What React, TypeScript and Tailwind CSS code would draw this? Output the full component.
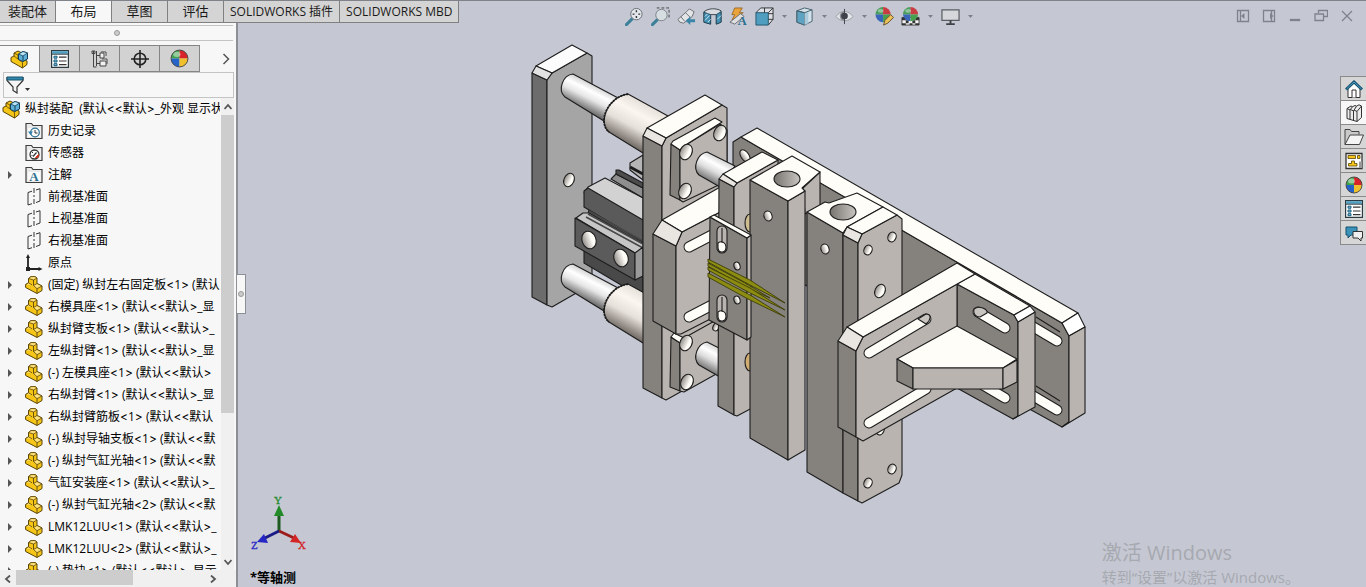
import React from "react";

const INK = "#1d1d1d";
const TOP = "#fffdf8";
const DARK = "#85827d";
const SIDE = "#b9b4b0";
const BEVEL = "#e9e6e1";

const ribbonTabs = ["装配体", "布局", "草图", "评估", "SOLIDWORKS 插件", "SOLIDWORKS MBD"];

type NodeKind = "history" | "sensor" | "note" | "plane" | "origin" | "part";

interface TreeNode {
  kind: NodeKind;
  label: string;
  expandable?: boolean;
}

const treeNodes: TreeNode[] = [
  { kind: "history", label: "历史记录" },
  { kind: "sensor", label: "传感器" },
  { kind: "note", label: "注解", expandable: true },
  { kind: "plane", label: "前视基准面" },
  { kind: "plane", label: "上视基准面" },
  { kind: "plane", label: "右视基准面" },
  { kind: "origin", label: "原点" },
  { kind: "part", label: "(固定) 纵封左右固定板<1> (默认", expandable: true },
  { kind: "part", label: "右模具座<1> (默认<<默认>_显", expandable: true },
  { kind: "part", label: "纵封臂支板<1> (默认<<默认>_", expandable: true },
  { kind: "part", label: "左纵封臂<1> (默认<<默认>_显", expandable: true },
  { kind: "part", label: "(-) 左模具座<1> (默认<<默认>", expandable: true },
  { kind: "part", label: "右纵封臂<1> (默认<<默认>_显", expandable: true },
  { kind: "part", label: "右纵封臂筋板<1> (默认<<默认", expandable: true },
  { kind: "part", label: "(-) 纵封导轴支板<1> (默认<<默", expandable: true },
  { kind: "part", label: "(-) 纵封气缸光轴<1> (默认<<默", expandable: true },
  { kind: "part", label: "气缸安装座<1> (默认<<默认>_", expandable: true },
  { kind: "part", label: "(-) 纵封气缸光轴<2> (默认<<默", expandable: true },
  { kind: "part", label: "LMK12LUU<1> (默认<<默认>_", expandable: true },
  { kind: "part", label: "LMK12LUU<2> (默认<<默认>_", expandable: true },
  { kind: "part", label: "(-) 垫块<1> (默认<<默认>_显示", expandable: true },
];

/* ---------- icons ---------- */

const PartIcon = () => (
  <svg width="18" height="18" viewBox="0 0 18 18" stroke="#5a4508" strokeLinejoin="round">
    <path d="M3.500 2.500 6 .6h4l2 1.400v5.500l5 2.500v4.500l-5 3L.6 11.500V8.500l2.900-1.700z" fill="#f5c518" />
    <path d="M3.500 2.500 6 .6h4l2 1.400-3.500 2zM.6 8.500l2.900-1.700 3.500 2M8.500 9.500 12 7.500l5 2.500-5 2.700z" fill="#ffe27a" strokeWidth=".8" />
    <path d="M8.500 4v5.500M12 12.700v4.600" fill="none" strokeWidth=".9" />
  </svg>
);

const AssemblyIcon = () => (
  <svg width="19" height="19" viewBox="0 0 19 19" strokeLinejoin="round">
    <path d="M1 7.500 4 6V3l4-2 3 1.500V8l6 3v3.500L12.500 18 1 11.500z" fill="#f5c518" stroke="#5a4508" />
    <path d="m4 3 4 2v4l4.500 3.500V18M4 6l4 3" fill="none" stroke="#5a4508" strokeWidth=".8" />
    <path d="M8.500 4 13 1.500 17.500 3v6L13 11.500 8.500 9.500z" fill="#5fb0d8" stroke="#123f57" />
    <path d="m8.500 4 4.500 2 4.500-3L13 1.500z" fill="#b7e2f5" stroke="#123f57" strokeWidth=".8" />
    <path d="M13 6v5.500" stroke="#123f57" />
  </svg>
);

const FolderFrame = ({ children }: { children?: React.ReactNode }) => (
  <svg width="18" height="18" viewBox="0 0 18 18">
    <path d="M1 16.500v-15h5.500l1.500 2h9v13z" fill="#e9e9e9" stroke="#3f3f3f" strokeWidth="1.200" />
    <path d="M3 6h12.500v9H3z" fill="#fafafa" />
    {children}
  </svg>
);

const ListIcon = ({ size = 18 }: { size?: number }) => (
  <svg width={size} height={size} viewBox="0 0 18 18">
    <path d="M.6.6h16.800v16.800H.6z" fill="#fff" stroke="#2c3a42" strokeWidth="1.200" />
    <path d="M1.200 1.200h15.600v2.600H1.200z" fill="#4d9fc4" />
    <path d="M0 4.200h18" stroke="#2c3a42" />
    <path d="M3 6.200h3v2H3zM3 10h3v2H3zM3 13.700h3v2H3z" fill="#8fc7df" stroke="#155b7c" />
    <path d="M8 7.200h7.500M8 11h7.500M8 14.700h7.500" stroke="#333" strokeWidth="1.200" />
  </svg>
);

const ColorBall = ({ size = 18 }: { size?: number }) => (
  <svg width={size} height={size} viewBox="0 0 18 18">
    <path d="M9 9V1a8 8 0 0 0-8 8z" fill="#3fa34d" />
    <path d="M9 9H1a8 8 0 0 0 8 8z" fill="#2563c9" />
    <path d="M9 9V1a8 8 0 0 1 8 8z" fill="#d8232a" />
    <path d="M9 9h8a8 8 0 0 1-8 8z" fill="#f0c02c" />
    <ellipse cx="6.500" cy="5" rx="3.500" ry="2.500" fill="#fff" opacity=".45" />
    <circle cx="9" cy="9" r="8" fill="none" stroke="#444" strokeWidth=".9" />
  </svg>
);

const nodeIcons: Record<NodeKind, React.ReactNode> = {
  history: (
    <FolderFrame>
      <circle cx="10" cy="10.500" r="4.300" fill="none" stroke="#2c6f90" strokeWidth="1.200" />
      <path d="M10 8v3h2.500" fill="none" stroke="#333" />
      <path d="m3 9.500 5 0-2.500 3.500z" fill="#2c7fa8" />
    </FolderFrame>
  ),
  sensor: (
    <FolderFrame>
      <circle cx="9.500" cy="10.500" r="4.500" fill="#fff" stroke="#333" strokeWidth="1.300" />
      <path d="M7 8.500h1M6.500 11.500h1" stroke="#333" />
      <path d="m8 12.500 3.500-4" stroke="#333" strokeWidth="1.200" />
      <path d="m10.500 13.500 3-3-.5 3z" fill="#d0341f" stroke="#d0341f" />
    </FolderFrame>
  ),
  note: (
    <FolderFrame>
      <text x="9" y="15" textAnchor="middle" fontFamily="Liberation Serif, serif" fontWeight="bold" fontSize="13" fill="#2c6f90">
        A
      </text>
    </FolderFrame>
  ),
  plane: (
    <svg width="18" height="18" viewBox="0 0 18 18" fill="none" stroke="#333">
      <path d="M3 17V4.500l4-1.300M11 2l4-1.300V13l-4 1.500M3 17l4-1.300" />
      <path d="M9 0v18" strokeDasharray="5 2 2 2" />
    </svg>
  ),
  origin: (
    <svg width="18" height="18" viewBox="0 0 18 18" fill="#222" stroke="#222">
      <path d="M3 15V3M3 15h12" strokeWidth="1.800" />
      <path d="M3 0 1 4h4zM17.500 15l-4-2v4zM1 13h4v4H1z" stroke="none" />
    </svg>
  ),
  part: <PartIcon />,
};

const Chevron = ({ d }: { d: string }) => (
  <svg width="8" height="8" viewBox="0 0 8 8" fill="none" stroke="#555" strokeWidth="1.800">
    <path d={d} />
  </svg>
);

/* ---------- feature manager ---------- */

const managerTabs = [
  { name: "设计树", icon: <AssemblyIcon /> },
  { name: "属性", icon: <ListIcon /> },
  {
    name: "配置",
    icon: (
      <svg width="18" height="18" viewBox="0 0 18 18" fill="#f2f2f2" stroke="#444">
        <path d="M2.500 1v16M5.500 1v15M2.500 17h3M6 5.500h3M6 13.500h3M1 1h3v2.500H1z" fill="none" />
        <path d="M9 3h4v5H9zM10 2h5v4M9 11h6v5H9zM11 9h5v5" />
      </svg>
    ),
  },
  {
    name: "尺寸",
    icon: (
      <svg width="18" height="18" viewBox="0 0 18 18" fill="none" stroke="#222" strokeWidth="1.600">
        <circle cx="9" cy="9" r="5.800" />
        <path d="M9 0v18M0 9h18" />
      </svg>
    ),
  },
  { name: "外观", icon: <ColorBall size={19} /> },
];

// Open Sans draws narrow angle brackets, so those come from Inter
const NodeLabel = ({ text }: { text: string }) => (
  <span>
    {text.split(/([<>]+)/).map((part, i) =>
      i % 2 ? (
        <span key={i} className="font-['Inter']">
          {part}
        </span>
      ) : (
        part
      ),
    )}
  </span>
);

const FeatureTree = () => (
  <div className="flex min-h-0 flex-1">
    <div className="min-w-0 flex-1 overflow-hidden whitespace-pre text-[12px] leading-[22px] text-black">
      <div className="flex h-[22px] items-center gap-1 pl-[2px]">
        <span className="shrink-0">
          <AssemblyIcon />
        </span>
        <NodeLabel text="纵封装配  (默认<<默认>_外观 显示状" />
      </div>
      <ul>
        {treeNodes.map((node, i) => (
          <li key={i} className="flex h-[22px] items-center">
            <span className="flex w-[25px] shrink-0 pl-2">
              {node.expandable && (
                <button type="button" aria-label="展开">
                  <svg width="4" height="8" viewBox="0 0 4 8">
                    <path d="M0 0l4 4-4 4z" fill="#555" />
                  </svg>
                </button>
              )}
            </span>
            <span className="w-[23px] shrink-0">{nodeIcons[node.kind]}</span>
            <NodeLabel text={node.label} />
          </li>
        ))}
      </ul>
    </div>
    <div className="ml-px mr-[2px] flex w-[13px] shrink-0 flex-col bg-[#f0f0f0]">
      <button type="button" aria-label="向上" className="flex h-[17px] items-center justify-center">
        <Chevron d="M.5 6 4 2l3.500 4" />
      </button>
      <div className="flex-1">
        <div className="h-[68%] bg-[#cdcdcd]" />
      </div>
      <button type="button" aria-label="向下" className="flex h-[17px] items-center justify-center">
        <Chevron d="M.5 2 4 6l3.500-4" />
      </button>
    </div>
  </div>
);

const FeatureManager = () => (
  <aside className="relative flex w-[238px] shrink-0 flex-col border-r-2 border-[#8d8f97] bg-[#f7f7f7]">
    <nav className="relative z-10 flex h-[22px] w-max shrink-0 border-b border-[#808080] text-[13px] text-[#1a1a1a]">
      {ribbonTabs.map((tab, i) => (
        <button
          key={tab}
          type="button"
          className={
            i === 1
              ? "w-14 border-r border-[#808080] bg-[#f7f7f7]"
              : i < 4
                ? "w-14 border-r border-[#808080] bg-[#d4d4d4]"
                : "border-r border-[#808080] bg-[#d4d4d4] px-[6px] text-[12px]"
          }
        >
          {tab}
        </button>
      ))}
    </nav>
    <div className="mr-[3px] mt-[2px] flex h-4 shrink-0 items-center justify-center border-y border-[#c4c4c4]">
      <span className="size-[6px] rounded-full border border-[#999] bg-[#ccc]" />
    </div>
    <div className="mt-1 flex h-[27px] shrink-0 items-stretch">
      {managerTabs.map((tab, i) => (
        <button
          key={tab.name}
          type="button"
          aria-label={tab.name}
          className={
            i === 0
              ? "flex w-10 items-center justify-center border-r border-t border-[#858585] bg-[#f7f7f7]"
              : "flex w-10 items-center justify-center border-y border-r border-[#858585] bg-[#d2d2d2]"
          }
        >
          {tab.icon}
        </button>
      ))}
      <button type="button" aria-label="更多" className="ml-auto pr-[6px]">
        <svg width="8" height="12" viewBox="0 0 8 12" fill="none" stroke="#555" strokeWidth="1.500">
          <path d="m1.500 1 5 5-5 5" />
        </svg>
      </button>
    </div>
    <label className="ml-[3px] mr-[2px] flex h-[26px] shrink-0 items-center border border-[#c4c4c4] pl-[2px]">
      <svg width="24" height="18" viewBox="0 0 24 18">
        <path d="M1 1.500h16v3L11 11v6l-4-2.500V11L1 4.500z" fill="#f4f4f4" stroke="#333" strokeWidth="1.200" />
        <path d="M1 1h16v3H1z" fill="#2f88ae" stroke="#1d536b" />
        <path d="M19 12h5l-2.500 3z" fill="#333" />
      </svg>
      <input type="text" aria-label="过滤" className="min-w-0 flex-1 bg-transparent text-[12px] outline-none" />
    </label>
    <FeatureTree />
    <div className="flex h-[17px] shrink-0 items-stretch bg-[#f0f0f0]">
      <button type="button" aria-label="向左" className="flex w-4 items-center justify-center">
        <Chevron d="M6 .5 2 4l4 3.500" />
      </button>
      <div className="flex-1">
        <div className="h-[15px] w-[62%] bg-[#cdcdcd]" />
      </div>
      <button type="button" aria-label="向右" className="mr-[15px] flex w-4 items-center justify-center">
        <Chevron d="M2 .5 6 4 2 7.500" />
      </button>
    </div>
    <button
      type="button"
      aria-label="折叠面板"
      className="absolute -right-[10px] top-[273px] z-10 flex h-10 w-[9px] items-center justify-center border border-l-0 border-[#8d8f97] bg-[#f7f7f7]"
    >
      <span className="size-[6px] rounded-full border border-[#999] bg-[#ccc]" />
    </button>
  </aside>
);

/* ---------- view toolbar ---------- */

const viewTools: { name: string; menu?: boolean; art: React.ReactNode }[] = [
  {
    name: "整屏显示全图",
    art: (
      <>
        <path d="m1.500 18.500 6-6" stroke="#3d8099" strokeWidth="3.200" strokeLinecap="round" />
        <circle cx="12" cy="7.500" r="6" fill="#e4e8ec" stroke="#666d74" />
        <path d="M12 3.500v2M12 9.500v2M8 7.500h2M14 7.500h2" stroke="#333" strokeWidth="1.500" />
      </>
    ),
  },
  {
    name: "局部放大",
    art: (
      <>
        <path d="M6 1h13v11" fill="none" stroke="#444" strokeDasharray="3 2" />
        <path d="m1.500 18.500 5-5" stroke="#3d8099" strokeWidth="3.200" strokeLinecap="round" />
        <circle cx="11" cy="8.500" r="6" fill="#d7dee2" stroke="#7a8289" />
      </>
    ),
  },
  {
    name: "上一视图",
    art: (
      <>
        <path d="m1 13 9-8 3-3 5 3-2 5-9 7-4-1z" fill="#e4e5e7" stroke="#6c6f74" />
        <path d="m9 6 5 5M4 10l4 5" stroke="#6c6f74" />
        <path d="m9 14.500 5-4.500v3h5v3h-5v3z" fill="#3b86a8" />
      </>
    ),
  },
  {
    name: "剖面视图",
    art: (
      <>
        <path d="M1 5c5-4 13-4 18-1v12l-5 2V8H8v10l-7-2z" fill="#d9dbdf" stroke="#3c464d" />
        <path d="M1 5.500 8 8v10l-7-2zM14 8l5-3v11l-5 2z" fill="#4391b4" stroke="#234b5e" />
        <path d="m2 10 3-3M2 14l5-5M5 16l3-3M15 13l4-4" stroke="#d4e8f0" />
      </>
    ),
  },
  {
    name: "动态注解视图",
    art: (
      <>
        <path d="M6 1h8l-3 5h4L3 14l3-6H3z" fill="#eaa33b" stroke="#8e5c16" strokeWidth=".8" />
        <path d="m1 16 11-9 4 3-10 8z" fill="#dedfe1" stroke="#6c6f74" />
        <text x="14" y="19" textAnchor="middle" fontFamily="Liberation Serif, serif" fontWeight="bold" fontSize="13" fill="#2c6f90">
          A
        </text>
      </>
    ),
  },
  {
    name: "视图定向",
    menu: true,
    art: (
      <>
        <path d="m1 6 5-5h13v12l-5 6" fill="#dce0e6" stroke="#333" />
        <path d="M1 6h13v13H1z" fill="#4f9dbf" stroke="#25566c" />
        <path d="m14 6 5-5M10 1v5M19 7h-5M14 13h5" fill="none" stroke="#333" />
      </>
    ),
  },
  {
    name: "显示样式",
    menu: true,
    art: (
      <>
        <path d="m2 4 8-3 8 2v12l-8 4-8-3z" fill="#d3e2ea" stroke="#46606e" />
        <path d="m2 4 8 2v13l-8-3z" fill="#5ea3c1" stroke="#46606e" />
        <path d="m10 6 4-1.500v12.700L10 19z" fill="#a9cbdb" />
        <path d="m2 4 8 2 8-3" fill="none" stroke="#46606e" />
      </>
    ),
  },
  {
    name: "隐藏/显示项目",
    menu: true,
    art: (
      <>
        <path d="M1 10c5-7 13-7 18 0-5 6-13 6-18 0z" fill="#e4e5e8" stroke="#9a9da3" />
        <path d="M10 4.500a5 5 0 0 0 0 10z" fill="#8b8e94" />
        <circle cx="10" cy="9.500" r="3.500" fill="#3d4349" />
        <path d="M10 2v16" stroke="#3d4349" />
      </>
    ),
  },
  {
    name: "编辑外观",
    art: (
      <>
        <path d="M8.500 8V0a8 8 0 0 0-8 8z" fill="#4a9e5c" />
        <path d="M8.500 8h-8a8 8 0 0 0 8 8z" fill="#3a66b9" />
        <path d="M8.500 8V0a8 8 0 0 1 8 8z" fill="#c93c42" />
        <path d="M8.500 8h8a8 8 0 0 1-8 8z" fill="#46a04e" />
        <ellipse cx="6" cy="4" rx="3" ry="2" fill="#fff" opacity=".4" />
        <path d="m9 19 1.500-5 6-6 3 3-6 6z" fill="#edc15a" stroke="#63502a" />
      </>
    ),
  },
  {
    name: "应用布景",
    menu: true,
    art: (
      <>
        <path d="M1 11h18v8H1z" fill="#f5f5f5" stroke="#444" />
        <path d="M1 11h4v3H1zM9 17h3v2H9zM5 14h3v3H5zM15 11h4v3h-4zM12 14h3v3h-3zM1 17h4v2H1zM15 17h4v2h-4z" fill="#333" />
        <path d="M10 8V0a8 8 0 0 0-8 8z" fill="#4a9e5c" />
        <path d="M10 8H2a8 8 0 0 0 8 7z" fill="#3a66b9" />
        <path d="M10 8V0a8 8 0 0 1 8 8z" fill="#c93c42" />
        <path d="M10 8h8a8 8 0 0 1-8 7z" fill="#46a04e" />
        <ellipse cx="7.500" cy="4" rx="3" ry="2" fill="#fff" opacity=".4" />
      </>
    ),
  },
  {
    name: "视图设定",
    menu: true,
    art: (
      <>
        <path d="M1 3h18v11H1z" fill="#d5d7db" stroke="#5b5e63" strokeWidth="1.300" />
        <path d="M10 14v3M5.500 18h9" stroke="#3f4145" strokeWidth="2" />
      </>
    ),
  },
];

const ViewToolbar = () => (
  <div className="relative flex h-[30px] items-center justify-center pr-[6px]">
    {viewTools.map((tool) => (
      <React.Fragment key={tool.name}>
        <button type="button" aria-label={tool.name} className="flex w-[26px] justify-center">
          <svg width="19" height="19" viewBox="0 0 20 20">
            {tool.art}
          </svg>
        </button>
        {tool.menu && (
          <button type="button" aria-label={`${tool.name}菜单`} className="flex w-[14px] justify-center">
            <svg width="5" height="3" viewBox="0 0 5 3">
              <path d="M0 0h5L2.500 3z" fill="#7d8088" />
            </svg>
          </button>
        )}
      </React.Fragment>
    ))}
  </div>
);

const windowButtons = [
  {
    name: "展开左侧",
    art: (
      <>
        <path d="M1.500 1.500h11v11h-11zM4.500 1.500v11" />
        <path d="M8.500 4v6L5 7z" fill="#7f828a" stroke="none" />
      </>
    ),
  },
  {
    name: "展开右侧",
    art: (
      <>
        <path d="M1.500 1.500h11v11h-11zM9.500 1.500v11" />
        <path d="M8 4v6l3.500-3z" fill="#7f828a" stroke="none" />
      </>
    ),
  },
  { name: "最小化", art: <path d="M2.500 10.500h9v1h-9z" /> },
  { name: "还原", art: <path d="M4.500 4V1.500h9v6H10M1 5h8.500v6.500H1z" /> },
  { name: "关闭", art: <path d="m2 2 10 10M12 2 2 12" /> },
];

const WindowButtons = () => (
  <div className="absolute right-[6px] top-0 flex h-[30px] items-center">
    {windowButtons.map((b) => (
      <button key={b.name} type="button" aria-label={b.name} className="flex w-[26px] justify-center">
        <svg width="14" height="14" viewBox="0 0 14 14" fill="none" stroke="#7f828a" strokeWidth="1.300">
          {b.art}
        </svg>
      </button>
    ))}
  </div>
);

/* ---------- task pane ---------- */

const taskPanes = [
  {
    name: "资源",
    icon: (
      <svg width="18" height="18" viewBox="0 0 18 18">
        <path d="M3 8v9.500h12V8L9 2.500z" fill="#fff" stroke="#333" />
        <path d="M7 17.500V10h4v7.500" fill="#fff" stroke="#333" />
        <path d="M1 9.500 9 2l8 7.500" fill="none" stroke="#17506e" strokeWidth="3" />
        <path d="M1.500 9 9 2l7.500 7" fill="none" stroke="#4aa3c7" />
      </svg>
    ),
  },
  {
    name: "设计库",
    icon: (
      <svg width="18" height="18" viewBox="0 0 18 18" fill="#ececec" stroke="#333" strokeLinejoin="round">
        <path d="M2 4.500 6 2l1.500.7L10 1.500l1.500.7L14 .8l2.500 1.200v11.500l-4.500 4L2 14.500z" />
        <path d="M2 4.500 5 6v9.500M5 6l2.500-3.300M5.500 5.500 8.500 7v9.500M8.500 7l3-4.800M9 6l3 1.500v10M12 7.500l4.500-5.500" fill="none" />
      </svg>
    ),
  },
  {
    name: "文件探索器",
    icon: (
      <svg width="20" height="18" viewBox="0 0 20 18" stroke="#444">
        <path d="M1 16.500V1.500h5l1.500 2H15v3" fill="#c9c9c9" />
        <path d="M1 16.500 6 7h13.500l-4 9.500z" fill="#f4f4f4" />
      </svg>
    ),
  },
  {
    name: "视图调色板",
    icon: (
      <svg width="18" height="18" viewBox="0 0 18 18">
        <path d="M1 1.500h16v15H1z" fill="#fff" stroke="#333" strokeWidth="1.300" />
        <path d="M3 3.500h7.500v3H3zM12.500 3.500H15v3h-2.500zM6.500 9h3v2.500H12V14H3.500v-2.500h3z" fill="#f5c518" stroke="#5a4508" strokeWidth=".8" />
        <path d="M14 9.500h3v6.500h-3z" fill="#999" />
      </svg>
    ),
  },
  { name: "外观", icon: <ColorBall /> },
  { name: "自定义属性", icon: <ListIcon /> },
  {
    name: "论坛",
    icon: (
      <svg width="18" height="18" viewBox="0 0 18 18">
        <path d="M1 3h11v8H6l-3 3v-3H1z" fill="#3b93b9" stroke="#17506e" />
        <path d="M8 7.500h9.500v6.500H16v3l-3-3H8z" fill="#f0f0f0" stroke="#333" />
      </svg>
    ),
  },
];

const TaskPane = () => (
  <nav className="absolute right-0 top-[75px] flex w-[26px] flex-col border-l border-t border-[#8a8a8a]">
    {taskPanes.map((pane, i) => (
      <button
        key={pane.name}
        type="button"
        aria-label={pane.name}
        className={
          i === 1
            ? "flex h-6 items-center justify-center border-b border-[#8a8a8a] bg-[#f7f7f7]"
            : "flex h-6 items-center justify-center border-b border-[#8a8a8a] bg-[#d6d6d6]"
        }
      >
        {pane.icon}
      </button>
    ))}
  </nav>
);

/* ---------- assembly drawing ---------- */

const Face = ({ p, f }: { p: string; f: string }) => <polygon points={p} fill={f} />;

const Hole = ({ x, y, rx = 4, ry = 5, a = 25 }: { x: number; y: number; rx?: number; ry?: number; a?: number }) => (
  <ellipse cx={x} cy={y} rx={rx} ry={ry} transform={`rotate(${a} ${x} ${y})`} fill="url(#bore)" />
);

const Slot = ({ d }: { d: string }) => (
  <g strokeLinecap="round" fill="none">
    <path d={d} stroke={INK} strokeWidth="11" />
    <path d={d} stroke={TOP} strokeWidth="9" />
  </g>
);

const GuideRod = () => (
  <>
    <path d="M573 74 620 99 604 121 565 97C557 90 563 75 573 74z" fill="url(#steel)" />
    <path d="M628 94 668 116 643 153 609 132C597 122 608 97 628 94z" fill="url(#sleeve)" />
    <path d="M628 94C608 97 597 122 609 132" fill="none" strokeWidth="1.800" strokeDasharray="2 1" />
  </>
);

const PinEnd = () => <path d="M707 152 735 166 720 187 699 175C692 168 697 154 707 152z" fill="url(#pin)" />;

const Assembly = () => (
  <svg
    viewBox="238 1 1128 586"
    className="absolute inset-0 h-full w-full"
    stroke={INK}
    strokeWidth="1.100"
    strokeLinejoin="round"
    role="img"
    aria-label="纵封装配"
  >
    <defs>
      <linearGradient id="steel" gradientUnits="userSpaceOnUse" x1="596" y1="84" x2="583" y2="110">
        <stop offset="0" stopColor="#c9c9cb" />
        <stop offset=".3" stopColor="#ffffff" />
        <stop offset=".55" stopColor="#e6e6e6" />
        <stop offset="1" stopColor="#626262" />
      </linearGradient>
      <linearGradient id="sleeve" gradientUnits="userSpaceOnUse" x1="648" y1="103" x2="626" y2="144">
        <stop offset="0" stopColor="#e2ddd7" />
        <stop offset=".3" stopColor="#fbf6f0" />
        <stop offset=".6" stopColor="#e6e0da" />
        <stop offset="1" stopColor="#6c655f" />
      </linearGradient>
      <linearGradient id="pin" gradientUnits="userSpaceOnUse" x1="723" y1="158" x2="709" y2="184">
        <stop offset="0" stopColor="#c9c9cb" />
        <stop offset=".3" stopColor="#ffffff" />
        <stop offset=".55" stopColor="#dcdcdc" />
        <stop offset="1" stopColor="#5c5c5c" />
      </linearGradient>
      <linearGradient id="bore" x1="0" y1="0" x2="1" y2="0">
        <stop offset="0" stopColor="#8f8a86" />
        <stop offset=".7" stopColor="#fffdf8" />
      </linearGradient>
      <linearGradient id="deep" x1="0" y1="0" x2="1" y2="0">
        <stop offset="0" stopColor="#77736f" />
        <stop offset="1" stopColor="#c8c4bf" />
      </linearGradient>
    </defs>

    {/* rear mounting plate */}
    <Face p="532,73 547,80 547,305 532,297" f="#6c6c6c" />
    <Face p="547,80 552,73 587,53 592,56 592,284 552,307 547,305" f="#a5a5a5" />
    <Face p="536,66 572,45 587,53 552,73" f="#fcfcfc" />
    <Face p="532,73 536,66 552,73 547,80" f="#e2e2e2" />
    <Hole x={569} y={180} rx={5} ry={7} />

    {/* pneumatic slide */}
    <Face p="630,163 643,155 643,180 630,170" f="#b5b5b5" />
    <path d="M630 167 643 174" strokeWidth="3" />
    <Face p="611,179 616,174 643,188 643,198" f="#8e8e8e" />
    <Face p="616,170 619,170 643,183 643,188 616,174" f="#4d4d4d" />
    <Face p="584,240 643,275 643,298 584,263" f="#494949" />
    <Face p="590,206 643,236 643,246 588,214" f="#515151" />
    <Face p="584,193 588,187 605,178 643,198 643,222" f="#d2d2d2" />
    <Face p="584,191 588,188 643,220 643,242 584,207" f="#5a5a5a" />
    <Face p="576,218 583,213 589,213 643,244 643,250 635,253" f="#c6c6c6" />
    <path d="M589 211 643 241M588 214 643 244M586 217 643 248" strokeWidth="1.500" stroke="#474747" />
    <Face p="575,218 635,253 635,280 575,246" f="#5b5b5b" />
    <Face p="635,253 643,247 643,276 635,280" f="#9a9a9a" />
    <Hole x={589} y={240} rx={7} ry={9} a={-20} />
    <Hole x={621} y={258} rx={7} ry={9} a={-20} />

    {/* guide rods */}
    <GuideRod />
    <g transform="translate(0 190)">
      <GuideRod />
    </g>

    {/* beam at the back */}
    <Face p="733,142 741,137 1062,323 1069,336 1069,422 1062,427 733,245" f={DARK} />
    <Face p="741,137 757,128 1078,313 1062,323" f={TOP} />
    <Face p="1062,323 1078,313 1085,327 1069,336" f="#ffffff" />
    <Face p="1069,336 1085,327 1085,413 1062,427 1069,422" f={SIDE} />
    <Hole x={745} y={156} rx={4} ry={7} a={-35} />
    <path d="M1036 317 1060 332M1036 386 1060 401" />
    <Slot d="M1030 325 1057 341" />
    <Slot d="M1030 394 1057 410" />

    {/* flange carrier */}
    <Face p="643,136 662,146 662,398 643,388" f={DARK} />
    <Face p="662,146 666,138 722,105 727,108 727,366 666,400 662,398" f={SIDE} />
    <Face p="647,128 705,95 722,105 666,138" f={TOP} />
    <Face p="643,136 647,128 666,138 662,146" f={BEVEL} />
    <Face p="671,144 680,150 680,200 670,195" f={DARK} />
    <Face p="680,150 684,146 720,124 727,130 727,181 683,202 680,200" f={SIDE} />
    <Face p="671,144 673,141 715,118 722,122 684,146 680,150" f={TOP} />
    <Hole x={686} y={152} rx={6} ry={8} />
    <Hole x={720} y={133} rx={6} ry={8} />
    <Hole x={685} y={191} rx={6} ry={8} />
    <Face p="671,337 680,343 680,391 670,387" f={DARK} />
    <Face p="680,343 684,338 727,314 727,368 684,392 680,391" f={SIDE} />
    <Face p="671,337 674,333 684,338 680,343" f={TOP} />
    <Hole x={686} y={343} rx={6} ry={8} />
    <Hole x={687} y={382} rx={6} ry={8} />
    <Hole x={716} y={327} rx={3} ry={4} />
    <PinEnd />
    <g transform="translate(0 190)">
      <PinEnd />
    </g>

    {/* slotted block */}
    <Face p="653,234 676,246 676,334 653,321" f={DARK} />
    <Face p="676,246 682,232 722,211 722,313 681,334 676,334" f={SIDE} />
    <Face p="662,220 722,186 722,211 682,232" f={TOP} />
    <Face p="653,234 662,220 682,232 676,246" f={BEVEL} />
    <Slot d="M689 247 714 234" />
    <Slot d="M689 317 714 304" />

    {/* narrow upright */}
    <Face p="719,179 734,187 734,415 718,406" f={DARK} />
    <Face p="734,187 737,183 778,160 778,394 737,416 734,415" f={SIDE} />
    <Face p="723,174 762,152 778,160 737,183" f={TOP} />
    <Face p="719,179 723,174 737,183 734,187" f={BEVEL} />
    <ellipse cx="750" cy="223" rx="5" ry="9" fill="#cdbd90" />
    <ellipse cx="750" cy="362" rx="5" ry="9" fill="#d0ac70" />

    {/* left arm */}
    <Face p="803,188 820,172 820,206 805,214" f={SIDE} />
    <Face p="750,180 788,201 788,460 750,438" f={DARK} />
    <Face p="788,201 805,191 805,450 788,460" f={SIDE} />
    <Face p="750,180 792,156 820,172 802,188 805,191 788,201" f={TOP} />
    <ellipse cx="787" cy="179" rx="13" ry="8" fill="url(#deep)" />
    <Hole x={768} y={216} a={-20} />

    {/* right arm */}
    <Face p="807,212 843,233 843,493 807,472" f={DARK} />
    <Face p="807,212 825,202 829,203 857,193 883,207 847,227 843,233" f={TOP} />
    <ellipse cx="843" cy="212" rx="13" ry="8" fill="url(#deep)" />
    <Hole x={825} y={249} a={-20} />
    <Face p="843,235 858,243 858,501 843,493" f={DARK} />
    <Face p="858,243 862,234 897,215 902,219 902,475 899,483 862,503 858,501" f={SIDE} />
    <Face p="847,227 883,207 897,215 862,234" f={TOP} />
    <Face p="843,235 847,227 862,234 858,243" f={BEVEL} />
    <Hole x={868} y={250} />
    <Hole x={892} y={237} />
    <Hole x={880} y={291} rx={5} ry={7} />
    <Hole x={880} y={430} />
    <Hole x={868} y={483} />
    <Hole x={892} y={469} />

    {/* corner bracket */}
    <Face p="957,284 1014,315 1018,322 1018,416 1013,419 957,388" f={DARK} />
    <Face p="1018,322 1035,312 1035,407 1013,419 1018,416" f={SIDE} />
    <Face p="957,284 975,274 1030,306 1014,315" f={TOP} />
    <Face p="1014,315 1030,306 1035,312 1018,322" f="#ffffff" />
    <Slot d="M978 312 1005 328" />
    <Slot d="M978 382 1005 398" />
    <path d="M974 309C979 305 988 309 987 313L980 317C975 317 973 313 974 309z" fill="#c8c4bf" />
    <Face p="838,341 856,351 856,437 838,427" f={DARK} />
    <Face p="856,351 863,337 957,284 957,388 863,441 856,437" f={SIDE} />
    <Face p="847,327 957,263 975,274 863,337" f={TOP} />
    <Face p="838,341 847,327 863,337 856,351" f={BEVEL} />
    <Slot d="M869 353 926 319" />
    <Slot d="M869 423 926 389" />
    <path d="M918 319 926 324C931 320 932 314 926 314z" fill="#c8c4bf" />
    <Face p="897,359 957,326 1017,359 1003,368 913,368" f={TOP} />
    <Face p="897,359 913,368 913,389 897,381" f={DARK} />
    <Face p="913,368 1003,368 1003,389 913,389" f={SIDE} />
    <Face p="1003,368 1017,360 1017,382 1003,389" f={SIDE} />

    {/* sensor plate with needles */}
    <Face p="710,217 747,238 747,340 709,320" f={DARK} />
    <Face p="747,238 751,235 751,337 747,340" f={SIDE} />
    <Face p="710,217 714,215 751,235 747,238" f={TOP} />
    <rect x="717" y="226" width="10" height="27" rx="5" fill={SIDE} />
    <path d="M722 228v15M718 243c4-3 8 0 8 4 0 6-7 7-8 1z" fill={TOP} />
    <rect x="717" y="295" width="10" height="27" rx="5" fill={SIDE} />
    <path d="M722 297v15M718 312c4-3 8 0 8 4 0 6-7 7-8 1z" fill={TOP} />
    <Hole x={737} y={266} rx={3} ry={4} a={-20} />
    <Hole x={737} y={300} rx={3} ry={4} a={-20} />
    <g fill="#8c8c12" stroke="#3c3c08" strokeWidth=".9">
      <polygon points="708,259 750,280 785,303 748,284 708,262" />
      <polygon points="708,263 745,283 770,298 745,287 708,266" />
      <polygon points="708,267 750,288 785,310 748,292 708,270" />
      <polygon points="708,273 750,295 785,317 748,299 708,277" />
    </g>
  </svg>
);

const Triad = () => (
  <svg width="56" height="56" viewBox="0 0 56 56" fontFamily="Liberation Serif, serif" fontSize="11">
    <path d="M29 36V20" stroke="#1f5a22" strokeWidth="3" />
    <path d="M29 10 24 21h10z" fill="#238a2a" />
    <path d="M29 36 44 43" stroke="#9c1c1c" strokeWidth="3" />
    <path d="M51 48 45 39 40 47z" fill="#d32525" />
    <path d="M29 36 15 43" stroke="#1b1b86" strokeWidth="3" />
    <path d="M7 47 14 39l4 9z" fill="#2626c4" />
    <text x="24" y="9" fill="#238a2a" stroke="#238a2a" strokeWidth=".3">Y</text>
    <text x="48" y="54" fill="#d32525" stroke="#d32525" strokeWidth=".3">X</text>
    <text x="1" y="54" fill="#2626c4" stroke="#2626c4" strokeWidth=".3">Z</text>
  </svg>
);

const Viewport = () => (
  <main className="relative min-w-0 flex-1 overflow-hidden">
    <Assembly />
    <ViewToolbar />
    <WindowButtons />
    <TaskPane />
    <div className="absolute bottom-0 left-3 flex flex-col gap-4">
      <Triad />
      <p className="text-[13px] font-bold leading-5 text-black">*等轴测</p>
    </div>
    <div className="absolute bottom-0 right-[66px] text-[#a7a9b0]">
      <p className="text-[20px] leading-7">激活 Windows</p>
      <p className="text-[15px] leading-5">转到“设置”以激活 Windows。</p>
    </div>
  </main>
);

const App: React.FC = () => {
  return (
    <div className="flex h-screen overflow-hidden border-t border-[#808289] bg-[#c5c8d3] font-['Open_Sans','Noto_Sans_CJK_SC',sans-serif]">
      <FeatureManager />
      <Viewport />
    </div>
  );
};

export default App;
